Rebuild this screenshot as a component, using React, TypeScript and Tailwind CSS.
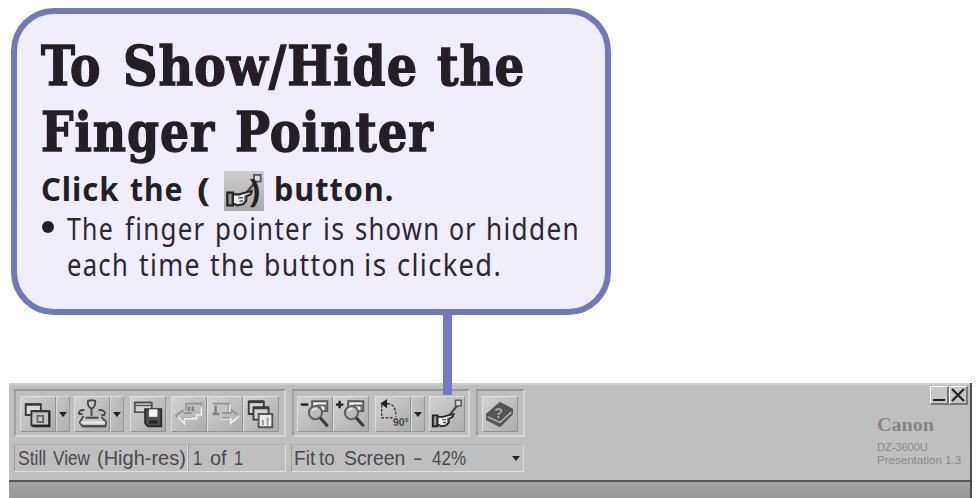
import { useLayoutEffect, useRef, useState } from 'react'
import type { ReactNode } from 'react'
import clsx from 'clsx'

// Stretches a word so that it fills the width given by its class
const Word = ({ children, className }: { children: string; className: string }) => {
  const ref = useRef<HTMLSpanElement>(null)
  const [scale, setScale] = useState(1)

  useLayoutEffect(() => {
    const el = ref.current
    if (el && el.parentElement) {
      // the last letter's tracking is not part of the word
      const tracking = parseFloat(getComputedStyle(el).letterSpacing) || 0
      setScale(el.parentElement.clientWidth / (el.offsetWidth - tracking))
    }
  }, [])

  return (
    <span className={clsx('block shrink-0 whitespace-nowrap', className)}>
      <span ref={ref} className="inline-block origin-left" style={{ transform: `scaleX(${scale})` }}>
        {children}
      </span>
    </span>
  )
}

const HandIcon = ({ className }: { className?: string }) => (
  <svg viewBox="0 0 36 36" className={className} aria-hidden="true">
    <path d="M29 9 19 21" stroke="#444" strokeWidth="2.200" />
    <rect x="27" y="3.500" width="6" height="6" fill="#ddd" stroke="#555" strokeWidth="1.600" />
    <path d="M3 19.500h5V31H3z" fill="#999" stroke="#222" strokeWidth="2" />
    <path d="M8 21h6l3-1 8-2-1 3-4 2v4l-3 3-5 1-4-2z" fill="#eee" stroke="#2a2a2a" strokeWidth="2" />
    <path d="M13 24h4M14 27h3M19 22v5" stroke="#555" strokeWidth="1.400" />
  </svg>
)

const ViewIcon = () => (
  <svg viewBox="0 0 36 36" className="size-full" fill="none" stroke="#3a3a3a" strokeWidth="2">
    <path d="M5 7.500h16V19H5z" fill="#dcdcdc" />
    <path d="M5 8h16" strokeWidth="2.500" />
    <path d="M11 15h19v15H11z" fill="#c4c4c4" />
    <path d="M11 15h19" strokeWidth="2.500" />
    <rect x="17.500" y="20" width="6" height="6.500" fill="#ccc" stroke="#666" />
    <path d="M30 15v16H12" stroke="#222" strokeWidth="2" />
  </svg>
)

const CameraIcon = () => (
  <svg viewBox="0 0 36 36" className="size-full" fill="none" stroke="#4a4a4a" strokeWidth="2">
    <path d="M13.500 5c0-2 8-2 8 0 0 4-2 7-4 7s-4-3-4-7z" fill="#ccc" />
    <path d="M17.500 12v9" />
    <path d="M10 14c-4-1-6 1-6 4M4 18h4M25 14c4-1 7 1 7 4M28 19h4" />
    <path d="M9 20 5 27l3 4h24l1-4-5-6" fill="#c6c6c6" />
    <path d="M6 27h26" stroke="#eee" />
    <path d="M11 22h14M8 31h24" strokeWidth="2.200" />
  </svg>
)

const SaveIcon = () => (
  <svg viewBox="0 0 36 36" className="size-full" fill="none" stroke="#555" strokeWidth="2">
    <path d="M4 6h18v10H4z" fill="#d4d4d4" />
    <path d="M4 5.500h18M4 9h18" strokeWidth="1.500" />
    <path d="M15 13h17v18H18l-3-3z" fill="#505050" stroke="#2a2a2a" />
    <path d="M19 13h9v8h-9z" fill="#f4f4f4" stroke="none" />
    <path d="M19 25h9v3h-9z" fill="#222" stroke="none" />
  </svg>
)

const PrevIcon = () => (
  <svg viewBox="0 0 36 36" className="size-full" fill="none" stroke="#929292" strokeWidth="1.800">
    <path d="M15 7h17M15 7v7M31 9v8" />
    <path d="M18 10v5M22 10v5" stroke="#808080" strokeWidth="2.500" />
    <path d="M12 14 4 20l8 7" />
    <path d="M12 17h9M12 26v-4h9" />
    <path d="m6 21 7 7v-5h13v-4h5v-9" stroke="#eeeeee" />
  </svg>
)

const NextIcon = () => (
  <svg viewBox="0 0 36 36" className="size-full" fill="none" stroke="#929292" strokeWidth="1.800">
    <path d="M5 7h17v10" />
    <path d="M8 9v9M5 18h7" stroke="#808080" strokeWidth="2.500" />
    <path d="M15 17h9v-4l7 6" />
    <path d="M14 23h10v5l9-8M23 8v8" stroke="#eeeeee" />
    <path d="M15 22h8" />
  </svg>
)

const StackIcon = () => (
  <svg viewBox="0 0 36 36" className="size-full" fill="#d4d4d4" stroke="#3a3a3a" strokeWidth="2">
    <path d="M5 5h16v13H5z" />
    <path d="M5 5h16" strokeWidth="3" />
    <path d="M10 11h16v13H10z" />
    <path d="M10 11.500h16" strokeWidth="3" />
    <path d="M15.500 18H30v14H15.500z" fill="#ececec" stroke="#555" />
    <path d="M20 24v6M25 22v8" stroke="#999" />
  </svg>
)

const MagnifyIcon = ({ plus }: { plus?: boolean }) => (
  <svg viewBox="0 0 36 36" className="size-full" fill="none">
    <path d="M15 4.500h16V15H15z" fill="#f0f0f0" stroke="#555" strokeWidth="2" />
    <path d="M20 9h9v5" stroke="#666" strokeWidth="2" />
    <circle cx="18.500" cy="16.500" r="7" fill="#bbb" stroke="#606060" strokeWidth="2.200" />
    <path d="M15 15c1-2 3-3 5-2" stroke="#e4e4e4" strokeWidth="2" />
    <path d="m23.500 22 8 9" stroke="#3a3a3a" strokeWidth="3.200" />
    <path d={plus ? 'M2 8h8M6 4v8' : 'M3 8h8'} stroke="#222" strokeWidth="2.500" />
  </svg>
)

const RotateIcon = () => (
  <svg viewBox="0 0 36 36" className="size-full" fill="none" stroke="#444" strokeWidth="1.500">
    <path d="M6 8v14h13M12 7c6 0 9 4 9 14" strokeDasharray="3 1.500" />
    <path d="M6 7h7M11 3.500 6 7l5 3.500z" fill="#222" stroke="#222" />
    <text x="18" y="31" fill="#444" stroke="none" className="text-[11px] font-bold">90°</text>
  </svg>
)

const HelpIcon = () => (
  <svg viewBox="0 0 36 36" className="size-full" fill="none" stroke="#555" strokeWidth="1.500">
    <path d="M4 18 18 6l13 7v5L18 31 4 24z" fill="#555" />
    <path d="m5 21 13 6 12-11" stroke="#bbb" />
    <text x="12" y="22" fill="#a8a8a8" stroke="none" className="text-[15px] font-bold">?</text>
  </svg>
)

const Tool = ({ children, label }: { children: ReactNode; label: string }) => (
  <button
    aria-label={label}
    className="size-9 shrink-0 border-t border-l border-r border-b border-t-[#dedede] border-l-[#dedede] border-r-[#929292] border-b-[#929292] bg-linear-to-br from-[#d2d2d2] to-[#acacac]"
  >
    {children}
  </button>
)

const Arrow = () => (
  <svg viewBox="0 0 8 5" className="h-[5px] w-2 shrink-0" aria-hidden="true">
    <path d="M0 0h8L4 5z" fill="#222" />
  </svg>
)

const Drop = ({ label }: { label: string }) => (
  <button
    aria-label={label}
    className="flex h-9 w-3.5 shrink-0 items-center justify-center border-t border-l border-r border-b border-t-[#d8d8d8] border-l-[#d8d8d8] border-r-[#969696] border-b-[#969696] bg-linear-to-br from-[#c4c4c4] to-[#b0b0b0]"
  >
    <Arrow />
  </button>
)

const Group = ({ children, className }: { children: ReactNode; className: string }) => (
  <div
    className={clsx(
      'flex h-12 shrink-0 items-center border-2 border-t-[#989898] border-l-[#a0a0a0] border-r-[#d6d6d6] border-b-[#d6d6d6] pt-0.5',
      className
    )}
  >
    {children}
  </div>
)

const Field = ({ children, className }: { children: ReactNode; className: string }) => (
  <div
    className={clsx(
      'flex h-7 shrink-0 items-center border border-t-[#b0b0b0] border-l-[#9c9c9c] border-r-[#dcdcdc] border-b-[#e0e0e0] text-[20px] leading-6 text-[#4a4a4a]',
      className
    )}
  >
    {children}
  </div>
)

const Callout = () => (
  <section className="ml-[11px] h-[307px] w-[600px] rounded-[43px] border-[6px] border-[#7379b7] bg-[#f0eefb] text-[#231f25]">
    <h1 className="ml-[24px] pt-[19px] font-['DejaVu_Serif_Condensed','DejaVu_Serif',serif] text-[55px] leading-[66px] font-bold tracking-[1px] [-webkit-text-stroke:1.3px_#231f25]">
      <span className="flex">
        <Word className="w-[60px]">To</Word>
        <Word className="ml-[22px] w-[294px]">Show/Hide</Word>
        <Word className="ml-[20px] w-[87px]">the</Word>
      </span>
      <span className="flex">
        <Word className="w-[173px]">Finger</Word>
        <Word className="ml-[21px] w-[198px]">Pointer</Word>
      </span>
    </h1>
    <div className="mt-[2px] ml-[24px] flex h-[43px] items-center font-['Noto_Sans',sans-serif] text-[33px] leading-[43px] font-bold tracking-[1px]">
      <Word className="w-[77px]">Click</Word>
      <Word className="ml-[12px] w-[52px]">the</Word>
      <Word className="ml-[15px] w-[13px]">(</Word>
      <span className="relative mt-[4px] ml-[14px] flex size-10 shrink-0 bg-linear-to-b from-[#cfcfcf] to-[#a8a8a8]">
        <HandIcon className="size-10" />
        <span className="absolute top-[-3px] left-[25px]">
          <Word className="w-[11px]">)</Word>
        </span>
      </span>
      <Word className="ml-[10px] w-[119px]">button.</Word>
    </div>
    <div className="mt-px ml-[25px] flex font-['Noto_Sans',sans-serif] text-[30px] leading-9 tracking-[1.5px] text-[#2b282e]">
      <span className="mt-[10px] size-3 shrink-0 rounded-full bg-[#231f25]" />
      <div className="ml-[13px]">
        <p className="flex">
          <Word className="w-[46px]">The</Word>
          <Word className="ml-[12px] w-[79px]">finger</Word>
          <Word className="ml-[11px] w-[97px]">pointer</Word>
          <Word className="ml-[11px] w-[21px]">is</Word>
          <Word className="ml-[11px] w-[84px]">shown</Word>
          <Word className="ml-[10px] w-[27px]">or</Word>
          <Word className="ml-[10px] w-[93px]">hidden</Word>
        </p>
        <p className="flex">
          <Word className="w-[61px]">each</Word>
          <Word className="ml-[11px] w-[61px]">time</Word>
          <Word className="ml-[10px] w-[44px]">the</Word>
          <Word className="ml-[10px] w-[91px]">button</Word>
          <Word className="ml-[9px] w-[22px]">is</Word>
          <Word className="ml-[11px] w-[104px]">clicked.</Word>
        </p>
      </div>
    </div>
  </section>
)

const App = () => {
  return (
    <div className="flex h-[498px] w-[976px] flex-col overflow-hidden bg-white pt-2 font-['Liberation_Sans',sans-serif]">
      <Callout />
      <div className="relative h-[68px] shrink-0">
        <div className="absolute top-[-2px] left-[443px] z-10 h-[82px] w-[9px] bg-[#747bc0]" />
      </div>
      <main className="ml-[9px] flex h-[115px] w-[963px] shrink-0 flex-col border-r-2 border-[#505050] bg-[#bfbfbf]">
        <div className="flex h-[99px] shrink-0 justify-between border-t-2 border-b-2 border-t-[#cdcdcd] border-b-[#555555] pl-[5px]">
          <div className="pt-1">
            <div className="flex gap-1.5">
              <Group className="w-[272px] pl-1">
                <Tool label="Still view"><ViewIcon /></Tool>
                <Drop label="View mode" />
                <span className="w-1" />
                <Tool label="Camera"><CameraIcon /></Tool>
                <Drop label="Camera presets" />
                <span className="w-1.5" />
                <Tool label="Save"><SaveIcon /></Tool>
                <span className="w-[5px]" />
                <Tool label="Previous"><PrevIcon /></Tool>
                <Tool label="Next"><NextIcon /></Tool>
                <Tool label="Thumbnails"><StackIcon /></Tool>
              </Group>
              <Group className="w-[178px] pl-[3px]">
                <Tool label="Zoom out"><MagnifyIcon /></Tool>
                <Tool label="Zoom in"><MagnifyIcon plus /></Tool>
                <span className="w-1.5" />
                <Tool label="Rotate"><RotateIcon /></Tool>
                <Drop label="Rotation" />
                <span className="w-1" />
                <Tool label="Finger pointer"><HandIcon className="size-full" /></Tool>
              </Group>
              <Group className="w-[49px] pl-[4px]">
                <Tool label="Help"><HelpIcon /></Tool>
              </Group>
            </div>
            <div className="mt-[7px] flex">
              <Field className="w-[174px] pl-[3px]">
                <Word className="w-[28px]">Still</Word>
                <Word className="ml-[7px] w-[37px]">View</Word>
                <Word className="ml-[7px] w-[89px]">(High-res)</Word>
              </Field>
              <Field className="w-[98px] pl-[4px]">
                <Word className="w-[9px]">1</Word>
                <Word className="ml-[8px] w-[17px]">of</Word>
                <Word className="ml-[7px] w-[9px]">1</Word>
              </Field>
              <Field className="ml-[5px] w-[233px] pl-[2px]">
                <Word className="w-[21px]">Fit</Word>
                <Word className="ml-[4px] w-[16px]">to</Word>
                <Word className="ml-[9px] w-[61px]">Screen</Word>
                <Word className="ml-[8px] w-[10px]">-</Word>
                <Word className="ml-[9px] w-[34px]">42%</Word>
                <span className="ml-[46px] flex"><Arrow /></span>
              </Field>
            </div>
          </div>
          <div className="w-[93px] pt-px">
            <div className="flex justify-end pr-0.5">
              <button aria-label="Minimize" className="flex h-[19px] w-[19px] items-end justify-center border-t border-l border-r-2 border-b-2 border-t-white border-l-white border-r-[#777] border-b-[#777] bg-[#c6c6c6] pb-0.5">
                <span className="h-[2px] w-3 bg-[#222]" />
              </button>
              <button aria-label="Close" className="flex h-[19px] w-[19px] items-center justify-center border-t border-l border-r-2 border-b-2 border-t-white border-l-white border-r-[#777] border-b-[#777] bg-[#c6c6c6]">
                <svg viewBox="0 0 14 14" className="size-3.5"><path d="m1 1 12 12M13 1 1 13" stroke="#222" strokeWidth="2.200" /></svg>
              </button>
            </div>
            <div className="mt-[10px] font-['Liberation_Serif',serif] text-[18px] leading-[20px] font-bold text-[#858585]">
              <Word className="w-[57px]">Canon</Word>
            </div>
            <div className="mt-[6px] text-[11px] leading-[13px] text-[#888888]">
              <Word className="w-[51px]">DZ-3600U</Word>
              <Word className="w-[84px]">Presentation 1.3</Word>
            </div>
          </div>
        </div>
        <div className="flex-1 bg-linear-to-b from-[#a2a2a2] to-[#989898]" />
      </main>
    </div>
  )
}

export default App
